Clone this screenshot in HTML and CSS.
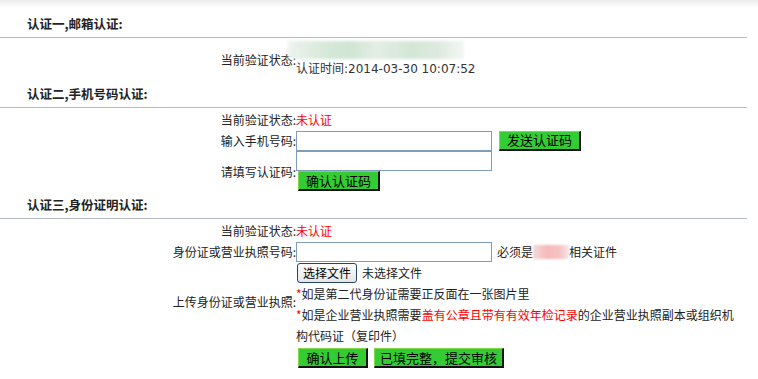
FILE: index.html
```html
<!DOCTYPE html>
<html lang="zh-CN">
<head>
    <meta charset="UTF-8">
    <title>认证中心</title>
    <link rel="stylesheet" href="styles.css">
</head>
<body>
    <div class="top-shade"></div>
    <div class="wrap">
        <div class="sec-title first">认证一,邮箱认证:</div>
        <table class="form-table">
            <tr class="row-email">
                <td class="label">当前验证状态:</td>
                <td class="value">
                    <span class="blur-mail"></span>
                    <div class="time">认证时间:2014-03-30 10:07:52</div>
                </td>
            </tr>
        </table>

        <div class="sec-title">认证二,手机号码认证:</div>
        <table class="form-table">
            <tr class="row-status">
                <td class="label">当前验证状态:</td>
                <td class="value"><span class="red">未认证</span></td>
            </tr>
            <tr class="row-input">
                <td class="label">输入手机号码:</td>
                <td class="value">
                    <div class="inline">
                        <input type="text" class="text-input">
                        <button class="green-btn send-btn">发送认证码</button>
                    </div>
                </td>
            </tr>
            <tr class="row-code">
                <td class="label">请填写认证码:</td>
                <td class="value">
                    <input type="text" class="text-input">
                    <div><button class="green-btn code-btn">确认认证码</button></div>
                </td>
            </tr>
        </table>

        <div class="sec-title">认证三,身份证明认证:</div>
        <table class="form-table">
            <tr class="row-status">
                <td class="label">当前验证状态:</td>
                <td class="value"><span class="red">未认证</span></td>
            </tr>
            <tr class="row-input">
                <td class="label">身份证或营业执照号码:</td>
                <td class="value">
                    <div class="inline">
                        <input type="text" class="text-input">
                        <span class="must">必须是<span class="blur-name"></span>相关证件</span>
                    </div>
                </td>
            </tr>
            <tr class="row-file">
                <td class="label"></td>
                <td class="value">
                    <div class="inline">
                        <button class="file-btn">选择文件</button>
                        <span class="no-file">未选择文件</span>
                    </div>
                </td>
            </tr>
            <tr class="row-upload">
                <td class="label top">上传身份证或营业执照:</td>
                <td class="value notes">
                    <div class="notes-text">
                        <div><span class="star">*</span>如是第二代身份证需要正反面在一张图片里</div>
                        <div><span class="star">*</span>如是企业营业执照需要<span class="red">盖有公章且带有有效年检记录</span>的企业营业执照副本或组织机构代码证（复印件）</div>
                    </div>
                    <div class="actions">
                        <button class="green-btn upload-btn">确认上传</button>
                        <button class="green-btn submit-btn">已填完整，提交审核</button>
                    </div>
                </td>
            </tr>
        </table>
    </div>
</body>
</html>
```

FILE: styles.css
```css
body {
    margin: 0;
    padding: 0;
    font-family: "DejaVu Sans", "Noto Sans CJK SC", sans-serif;
    font-size: 12px;
    color: #222;
    background: #fff;
}
.top-shade {
    height: 8px;
    background: linear-gradient(#ececec, #fff);
}
.wrap {
    width: 747px;
}
.sec-title {
    height: 27px;
    line-height: 27px;
    padding-left: 27px;
    font-weight: bold;
    font-size: 12.5px;
    font-family: "Noto Sans CJK SC", sans-serif;
    border-bottom: 1px solid #b4bbc2;
}
.sec-title.first {
    margin-top: 2px;
}
.form-table {
    border-collapse: collapse;
    width: 100%;
}
.form-table td {
    padding: 0;
    vertical-align: middle;
    line-height: 21px;
}
.label {
    width: 296px;
    text-align: right;
    font-family: "Noto Sans CJK SC", sans-serif;
}
.label.top {
    vertical-align: top !important;
    padding-top: 8px !important;
}
.value {
    font-family: "Noto Sans CJK SC", sans-serif;
}
.row-email td {
    height: 42px;
}
.blur-mail {
    display: block;
    width: 176px;
    height: 18px;
    margin: 2px 0 0 -8px;
    background: linear-gradient(90deg, #eef3ef 0%, #d7e9d9 20%, #cfe5d3 35%, #e3ede4 50%, #d3e7d6 70%, #dde9de 85%, #f4f7f4 100%);
    filter: blur(1.5px);
}
.time {
    line-height: 20px;
    font-family: "DejaVu Sans", "Noto Sans CJK SC", sans-serif;
    color: #333;
}
.row-status td {
    height: 22px;
}
.row-input td {
    height: 21px;
}
.red {
    color: #f00;
}
.inline {
    display: flex;
    align-items: center;
}
.text-input {
    display: block;
    width: 196px;
    height: 20px;
    box-sizing: border-box;
    margin: 0;
    padding: 0 2px;
    border: 1px solid #7f9db9;
    font-size: 12px;
}
.row-input .text-input {
    margin-top: 1px;
}
.green-btn {
    height: 20px;
    box-sizing: border-box;
    padding: 0;
    background: #33cc33;
    border-style: solid;
    border-width: 1px 2px 2px 1px;
    border-color: #86d84a #111 #111 #86d84a;
    font-family: "Noto Sans CJK SC", sans-serif;
    font-size: 13px;
    line-height: 16px;
    color: #000;
    cursor: pointer;
}
.send-btn {
    width: 82px;
    margin-left: 7px;
}
.code-btn {
    width: 82px;
    margin-left: 2px;
    display: block;
}
.must {
    margin-left: 5px;
}
.blur-name {
    display: inline-block;
    width: 36px;
    height: 14px;
    vertical-align: -2px;
    background: linear-gradient(90deg, #f3d9da, #f7b9bb 40%, #f5c4c6 75%, #f8e6e7);
    filter: blur(1px);
}
.row-file td {
    height: 21px;
}
.file-btn {
    height: 20px;
    padding: 0 5px;
    margin-left: 1px;
    box-sizing: border-box;
    border: 1px solid #27446b;
    border-radius: 3px;
    background: linear-gradient(#fdfdfd, #e6e6e6);
    font-family: "Noto Sans CJK SC", sans-serif;
    font-size: 12px;
    line-height: 16px;
    color: #000;
}
.no-file {
    margin-left: 5px;
}
.notes {
    vertical-align: top !important;
}
.notes-text {
    width: 442px;
}
.star {
    color: #f00;
}
.actions {
    display: flex;
    gap: 6px;
    margin: 2px 0 0 2px;
}
.upload-btn {
    width: 70px;
}
.submit-btn {
    width: 130px;
}
```
